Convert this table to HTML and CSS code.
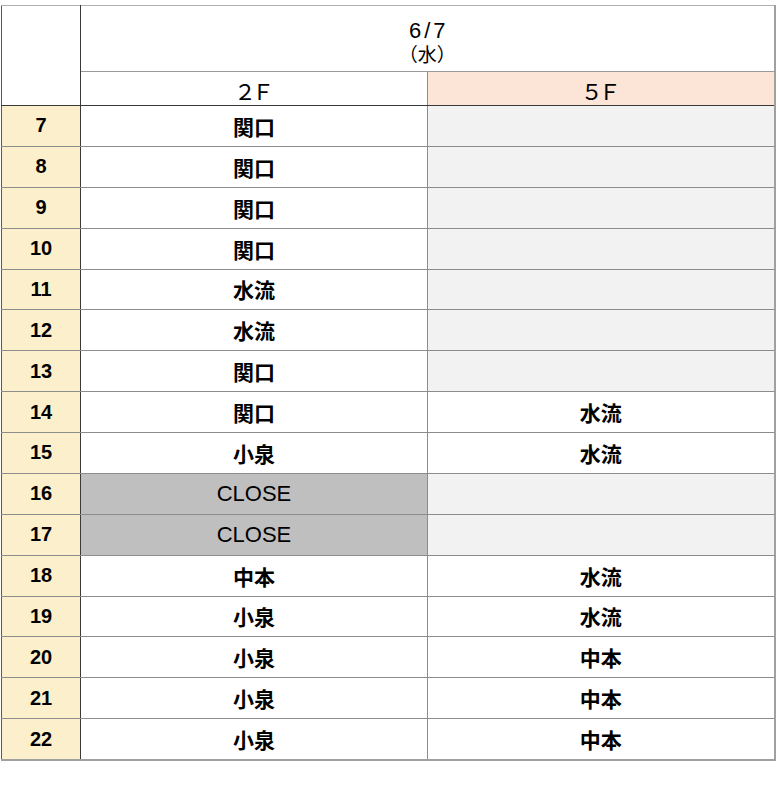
FILE: index.html
```html
<!DOCTYPE html>
<html lang="ja">
<head>
<meta charset="utf-8">
<title>6/7 シフト表</title>
<link rel="stylesheet" href="styles.css">
</head>
<body>
<table class="shift">
  <colgroup>
    <col class="col-hour">
    <col class="col-floor">
    <col class="col-floor">
  </colgroup>
  <thead>
    <tr class="row-date">
      <th class="corner" rowspan="2"></th>
      <th class="date" colspan="2"><span class="date-day">6/7</span><span class="date-week">（水）</span></th>
    </tr>
    <tr class="row-floor">
      <th class="floor">２Ｆ</th>
      <th class="floor floor-5">５Ｆ</th>
    </tr>
  </thead>
  <tbody>
    <tr><th class="hour">7</th><td class="name">関口</td><td class="name empty"></td></tr>
    <tr><th class="hour">8</th><td class="name">関口</td><td class="name empty"></td></tr>
    <tr><th class="hour">9</th><td class="name">関口</td><td class="name empty"></td></tr>
    <tr><th class="hour">10</th><td class="name">関口</td><td class="name empty"></td></tr>
    <tr><th class="hour">11</th><td class="name">水流</td><td class="name empty"></td></tr>
    <tr><th class="hour">12</th><td class="name">水流</td><td class="name empty"></td></tr>
    <tr><th class="hour">13</th><td class="name">関口</td><td class="name empty"></td></tr>
    <tr><th class="hour">14</th><td class="name">関口</td><td class="name">水流</td></tr>
    <tr><th class="hour">15</th><td class="name">小泉</td><td class="name">水流</td></tr>
    <tr><th class="hour">16</th><td class="name closed">CLOSE</td><td class="name empty"></td></tr>
    <tr><th class="hour">17</th><td class="name closed">CLOSE</td><td class="name empty"></td></tr>
    <tr><th class="hour">18</th><td class="name">中本</td><td class="name">水流</td></tr>
    <tr><th class="hour">19</th><td class="name">小泉</td><td class="name">水流</td></tr>
    <tr><th class="hour">20</th><td class="name">小泉</td><td class="name">中本</td></tr>
    <tr><th class="hour">21</th><td class="name">小泉</td><td class="name">中本</td></tr>
    <tr><th class="hour">22</th><td class="name">小泉</td><td class="name">中本</td></tr>
  </tbody>
</table>
</body>
</html>
```

FILE: styles.css
```css
html, body {
  margin: 0;
  padding: 0;
  background: #ffffff;
}

body {
  padding: 5px 0 0 1px;
  font-family: "Liberation Sans", "Noto Sans CJK JP", sans-serif;
  color: #000;
}

.shift {
  border-collapse: collapse;
  table-layout: fixed;
  width: 774px;
  border-top: 1px solid #b0b0b0;
  border-left: 1px solid #4a5888;
  border-right: 2px solid #a0a0a0;
  border-bottom: 2px solid #a0a0a0;
}

.col-hour { width: 79px; }
.col-floor { width: 347px; }

.shift th,
.shift td {
  padding: 0;
  text-align: center;
  vertical-align: middle;
}

.corner {
  background: #fff;
  border-right: 1px solid #3a3a3a;
  border-bottom: 1px solid #3a3a3a;
}

.row-date .date {
  height: 65px;
  font-weight: normal;
  border-bottom: 1px solid #999;
  line-height: 1;
  vertical-align: top;
}

.date-day {
  display: block;
  font-family: "Liberation Sans", sans-serif;
  font-size: 22px;
  line-height: 22px;
  letter-spacing: 3px;
  text-indent: 3px;
  padding-top: 14px;
}

.date-week {
  display: block;
  font-family: "Noto Sans CJK JP", sans-serif;
  font-size: 19px;
  line-height: 19px;
  margin-top: 2px;
}

.row-floor .floor {
  height: 31px;
  font-family: "Noto Sans CJK JP", sans-serif;
  font-weight: normal;
  font-size: 22px;
  letter-spacing: -4px;
  text-indent: -4px;
  line-height: 1;
  padding-top: 2px;
  border-bottom: 1px solid #3a3a3a;
}

.floor-5 {
  background: #fce4d6;
  border-left: 1px solid #8c8c8c;
}

.hour {
  height: 39.875px;
  background: #fcf0cc;
  font-family: "Liberation Sans", sans-serif;
  font-weight: bold;
  font-size: 20px;
  border-right: 1px solid #3a3a3a;
  border-bottom: 1px solid #8c8c8c;
}

.name {
  height: 39.875px;
  font-family: "Noto Sans CJK JP", sans-serif;
  font-weight: bold;
  font-size: 21px;
  border-bottom: 1px solid #8c8c8c;
}

.name + .name {
  border-left: 1px solid #8c8c8c;
}

.empty {
  background: #f2f2f2;
}

.closed {
  background: #bfbfbf;
  font-family: "Liberation Sans", sans-serif;
  font-weight: normal;
  font-size: 22px;
}
```
